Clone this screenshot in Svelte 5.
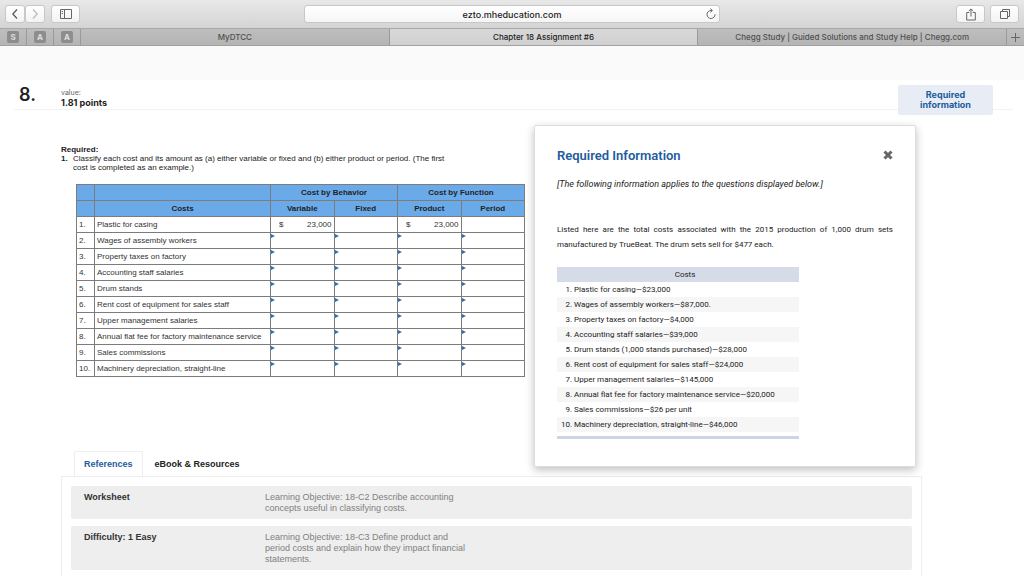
<script>
    const pinned = ['S', 'A', 'A'];

    const costs = [
        'Plastic for casing',
        'Wages of assembly workers',
        'Property taxes on factory',
        'Accounting staff salaries',
        'Drum stands',
        'Rent cost of equipment for sales staff',
        'Upper management salaries',
        'Annual flat fee for factory maintenance service',
        'Sales commissions',
        'Machinery depreciation, straight-line'
    ];

    const columns = ['Variable', 'Fixed', 'Product', 'Period'];

    const amounts = [
        'Plastic for casing—$23,000',
        'Wages of assembly workers—$87,000.',
        'Property taxes on factory—$4,000',
        'Accounting staff salaries—$39,000',
        'Drum stands (1,000 stands purchased)—$28,000',
        'Rent cost of equipment for sales staff—$24,000',
        'Upper management salaries—$145,000',
        'Annual flat fee for factory maintenance service—$20,000',
        'Sales commissions—$26 per unit',
        'Machinery depreciation, straight-line—$46,000'
    ];

    const references = [
        { name: 'Worksheet', text: 'Learning Objective: 18-C2 Describe accounting concepts useful in classifying costs.' },
        { name: 'Difficulty: 1 Easy', text: 'Learning Objective: 18-C3 Define product and period costs and explain how they impact financial statements.' }
    ];

    let address = $state('ezto.mheducation.com');
    let showInfo = $state(true);
</script>

<div class="page">
    <header class="toolbar">
        <div class="tools">
            <div class="nav">
                <button aria-label="Back">
                    <svg width="8" height="12" viewBox="0 0 8 12"><path d="M6 1.5 1.8 6 6 10.5" stroke="#555" stroke-width="1.2" /></svg>
                </button>
                <button aria-label="Forward">
                    <svg width="8" height="12" viewBox="0 0 8 12"><path d="M2 1.5 6.2 6 2 10.5" stroke="#bbb" stroke-width="1.2" /></svg>
                </button>
            </div>
            <button class="wide" aria-label="Show sidebar">
                <svg width="12" height="10" viewBox="0 0 12 10"><path d="M.5 .5h11v9H.5zM4.5 .5v9M1.7 2.5h1.3M1.7 4.5h1.3" stroke="#666" /></svg>
            </button>
        </div>
        <div class="address">
            <input type="text" aria-label="Address" bind:value={address} />
            <button aria-label="Reload">
                <svg width="10" height="12" viewBox="0 0 10 12"><path d="M9 6.3A4 4 0 1 1 5 2.5h1M4.3 .6 6.4 2.5 4.3 4.4" stroke="#666" /></svg>
            </button>
        </div>
        <div class="tools end">
            <button class="wide" aria-label="Share">
                <svg width="10" height="13" viewBox="0 0 10 13"><path d="M3.3 4.5H.7v7.5h8.6V4.5H6.7M5 8.5V1M2.8 3 5 .9 7.2 3" stroke="#666" /></svg>
            </button>
            <button class="wide" aria-label="Show all tabs">
                <svg width="10" height="10" viewBox="0 0 10 10"><path d="M.5 2.5h7v7h-7zM2.5 2.5v-2h7v7h-2" stroke="#666" /></svg>
            </button>
        </div>
    </header>

    <nav class="tabs">
        {#each pinned as letter}
            <a class="pin" href="#pinned"><span>{letter}</span></a>
        {/each}
        <a class="tab" href="#mydtcc">MyDTCC</a>
        <a class="tab active" href="#assignment">Chapter 18 Assignment #6</a>
        <a class="tab" href="#chegg">Chegg Study | Guided Solutions and Study Help | Chegg.com</a>
        <button class="new-tab" aria-label="New tab">
            <svg width="9" height="9" viewBox="0 0 9 9"><path d="M4.5 0v9M0 4.5h9" stroke="#666" /></svg>
        </button>
    </nav>

    <div class="band"></div>

    <div class="question-head">
        <span class="number">8.</span>
        <div class="points">
            <small>value:</small>
            <strong>1.81 points</strong>
        </div>
        <button class="info-toggle" onclick={() => (showInfo = !showInfo)}>Required information</button>
    </div>

    <main>
        <section class="question">
            <h2>Required:</h2>
            <div class="task">
                <b>1.</b>
                <p>Classify each cost and its amount as (a) either variable or fixed and (b) either product or period. (The first cost is completed as an example.)</p>
            </div>

            <table class="sheet">
                <colgroup>
                    <col class="c-no" />
                    <col class="c-name" />
                    <col span="4" />
                </colgroup>
                <thead>
                    <tr>
                        <th></th>
                        <th></th>
                        <th colspan="2">Cost by Behavior</th>
                        <th colspan="2">Cost by Function</th>
                    </tr>
                    <tr>
                        <th></th>
                        <th>Costs</th>
                        {#each columns as column}
                            <th>{column}</th>
                        {/each}
                    </tr>
                </thead>
                <tbody>
                    {#each costs as cost, i}
                        <tr>
                            <td>{i + 1}.</td>
                            <td>{cost}</td>
                            {#each columns as column, c}
                                {#if i === 0}
                                    <td>
                                        {#if c % 2 === 0}
                                            <div class="money"><span>$</span><span>23,000</span></div>
                                        {/if}
                                    </td>
                                {:else}
                                    <td class="entry"><input type="text" aria-label="{cost}, {column}" /></td>
                                {/if}
                            {/each}
                        </tr>
                    {/each}
                </tbody>
            </table>
        </section>

        {#if showInfo}
            <div class="dialog" role="dialog" aria-labelledby="info-title">
                <div class="dialog-head">
                    <h2 id="info-title">Required Information</h2>
                    <button aria-label="Close" onclick={() => (showInfo = false)}>
                        <svg width="10" height="10" viewBox="0 0 10 10"><path d="M1.5 1.5 8.5 8.5M8.5 1.5 1.5 8.5" stroke="#666" stroke-width="3" /></svg>
                    </button>
                </div>
                <p class="note">[The following information applies to the questions displayed below.]</p>
                <p class="intro">Listed here are the total costs associated with the 2015 production of 1,000 drum sets manufactured by TrueBeat. The drum sets sell for $477 each.</p>
                <table class="costs">
                    <thead>
                        <tr><th colspan="2">Costs</th></tr>
                    </thead>
                    <tbody>
                        {#each amounts as amount, i}
                            <tr><td>{i + 1}.</td><td>{amount}</td></tr>
                        {/each}
                    </tbody>
                </table>
            </div>
        {/if}
    </main>

    <section class="resources">
        <nav class="resource-tabs">
            <a class="current" href="#references">References</a>
            <a href="#ebook">eBook &amp; Resources</a>
        </nav>
        <div class="panel">
            {#each references as item}
                <article>
                    <h3>{item.name}</h3>
                    <p>{item.text}</p>
                </article>
            {/each}
        </div>
    </section>
</div>

<style>
    :global(body) {
        margin: 0;
        background: #fff;
    }
    .page {
        display: flex;
        flex-direction: column;
        min-height: 100vh;
        font-family: "Liberation Sans", Arial, sans-serif;
        font-size: 8px;
        color: #333;
    }
    .page :global(*) {
        box-sizing: border-box;
    }
    svg {
        display: block;
        fill: none;
    }
    h2, h3, p {
        margin: 0;
    }
    button, input {
        padding: 0;
        border: 0;
        background: none;
        font: inherit;
        color: inherit;
    }
    a {
        color: inherit;
        text-decoration: none;
    }

    .toolbar {
        display: flex;
        align-items: center;
        height: 28px;
        padding: 0 5px;
        background: linear-gradient(#e8e8e8, #d4d4d4);
        font-family: Inter, sans-serif;
    }
    .tools {
        display: flex;
        flex: 1;
        gap: 6px;
    }
    .tools.end {
        justify-content: flex-end;
        gap: 5px;
    }
    .tools button {
        display: flex;
        align-items: center;
        justify-content: center;
        width: 20px;
        height: 18px;
        border: 1px solid #c8c8c8;
        border-radius: 3px;
        background: linear-gradient(#fff, #f3f3f3);
    }
    .tools .wide {
        width: 29px;
    }
    .nav {
        display: flex;
    }
    .address {
        display: flex;
        align-items: center;
        width: 41%;
        height: 18px;
        padding: 0 3px;
        border: 1px solid #c8c8c8;
        border-radius: 3px;
        background: linear-gradient(#fff, #f5f5f5);
    }
    .address input {
        flex: 1;
        padding-left: 10px;
        text-align: center;
        font-size: 9px;
        font-weight: 500;
        color: #222;
    }

    .tabs {
        display: flex;
        height: 18px;
        border-top: 1px solid #a8a8a8;
        border-bottom: 1px solid #a0a0a0;
        background: linear-gradient(#bebebe, #b4b4b4);
        font-family: Inter, sans-serif;
        font-weight: 500;
        color: #505050;
    }
    .tabs a, .new-tab {
        display: flex;
        align-items: center;
        justify-content: center;
        border-right: 1px solid #9a9a9a;
    }
    .tabs .pin {
        width: 27px;
    }
    .pin span {
        width: 12px;
        border-radius: 2px;
        background: #8d8d8d;
        font-weight: 700;
        line-height: 12px;
        text-align: center;
        color: #ddd;
    }
    .tab {
        flex: 1;
        white-space: nowrap;
    }
    .tab.active {
        background: linear-gradient(#d8d8d8, #d0d0d0);
        color: #222;
    }
    .new-tab {
        width: 17px;
        border-right: 0;
    }

    .band {
        height: 34px;
        background: #fafafa;
    }

    .question-head {
        display: flex;
        height: 30px;
        margin: 0 11px 0 14px;
        padding: 5px 20px 0 5px;
        border-bottom: 1px solid #f2f2f2;
        font-family: Inter, sans-serif;
        color: #222;
    }
    .number {
        width: 42px;
        font-size: 18px;
        font-weight: 600;
        line-height: 20px;
    }
    .points {
        display: flex;
        flex: 1;
        flex-direction: column;
        padding-top: 3px;
    }
    .points small {
        font-size: 7px;
        line-height: 10px;
        color: #666;
    }
    .points strong {
        font-size: 9px;
        line-height: 10px;
    }
    .info-toggle {
        width: 95px;
        height: 30px;
        padding: 0 16px;
        border-radius: 2px;
        background: #e8edf5;
        font-size: 9px;
        font-weight: 700;
        line-height: 10px;
        color: #1d5a9c;
    }

    main {
        position: relative;
        padding: 35px 0 74px 61px;
    }
    .question {
        width: 466px;
    }
    .question h2, .task {
        font-size: 8px;
        line-height: 9px;
        color: #222;
    }
    .task {
        display: flex;
        margin-bottom: 12px;
    }
    .task b {
        width: 12px;
    }
    .task p {
        width: 384px;
    }

    .sheet {
        width: 449px;
        margin-left: 15px;
        border-collapse: collapse;
        table-layout: fixed;
    }
    .c-no {
        width: 18px;
    }
    .c-name {
        width: 176px;
    }
    .sheet tr {
        height: 16px;
    }
    .sheet th, .sheet td {
        padding: 0 2px;
        border: 1px solid #7c7c7c;
        line-height: 15px;
        white-space: nowrap;
    }
    .sheet th {
        background: #6aaae9;
        color: #222;
    }
    .money {
        display: flex;
        justify-content: space-between;
        padding-left: 6px;
    }
    .sheet .entry {
        position: relative;
        padding: 0;
    }
    .entry::before {
        content: "";
        position: absolute;
        top: 1px;
        left: 0;
        border: 2px solid transparent;
        border-right: 0;
        border-left: 4px solid #2a70b8;
    }
    .entry input {
        display: block;
        width: 100%;
        height: 15px;
        padding: 0 4px;
    }

    .dialog {
        position: absolute;
        top: 15px;
        right: 108px;
        width: 382px;
        padding: 19px 22px 27px;
        border: 1px solid #ddd;
        border-radius: 2px;
        background: #fff;
        box-shadow: 0 3px 9px rgba(0, 0, 0, 0.25);
        font-family: Roboto, sans-serif;
        line-height: 15px;
        color: #222;
    }
    .dialog-head {
        display: flex;
        align-items: center;
        justify-content: space-between;
        height: 20px;
    }
    .dialog h2 {
        font-size: 13px;
        font-weight: 600;
        color: #1f5c9e;
    }
    .note {
        margin-top: 12px;
        font-size: 9px;
        font-style: italic;
    }
    .intro {
        margin: 30px 0 15px;
        text-align: justify;
    }
    .costs {
        width: 242px;
        padding-bottom: 4px;
        border-bottom: 3px solid #cdd5e2;
        border-spacing: 0;
    }
    .costs th {
        padding: 0 0 0 14px;
        background: #d5dbe7;
        font-weight: 400;
    }
    .costs td {
        padding: 0 2px 0 0;
    }
    .costs td:first-child {
        width: 17px;
        text-align: right;
    }
    .costs tbody tr:nth-child(even) {
        background: #f6f6f6;
    }

    .resources {
        display: flex;
        flex: 1;
        flex-direction: column;
        margin: 0 102px 0 61px;
    }
    .resource-tabs {
        display: flex;
        margin-left: 13px;
        font-size: 9px;
        font-weight: 700;
        line-height: 24px;
        color: #222;
    }
    .resource-tabs a {
        padding: 0 11px;
        border: 1px solid transparent;
        border-bottom: 0;
    }
    .resource-tabs .current {
        margin-bottom: -1px;
        padding: 0 9px;
        border-color: #eee;
        border-radius: 2px 2px 0 0;
        background: #fff;
        color: #1f5c9e;
    }
    .panel {
        flex: 1;
        padding: 9px;
        border: 1px solid #eee;
        border-bottom: 0;
    }
    article {
        display: flex;
        margin-bottom: 7px;
        padding: 6px 13px 5px;
        border-radius: 2px;
        background: #eee;
        font-size: 9px;
        line-height: 11px;
    }
    article:last-child {
        margin-bottom: 0;
    }
    article h3 {
        width: 181px;
        font-size: 9px;
    }
    article p {
        width: 206px;
        color: #808080;
    }
</style>
